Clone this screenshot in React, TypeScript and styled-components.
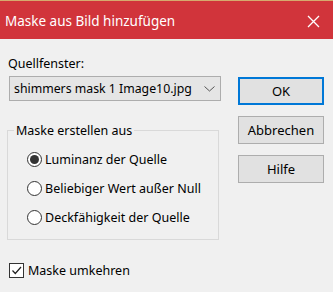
import React from 'react';
import styled, { createGlobalStyle } from 'styled-components';

const GlobalStyle = createGlobalStyle`
    body {
        margin: 0;
        background: #f0f0f0;
        font-family: "Noto Sans", "Liberation Sans", sans-serif;
    }
`;

const options = [
    { label: 'Luminanz der Quelle', checked: true },
    { label: 'Beliebiger Wert außer Null', checked: false },
    { label: 'Deckfähigkeit der Quelle', checked: false },
];

const App: React.FC = () => {
    return (
        <Window>
            <GlobalStyle />
            <TitleBar>
                <Title>Maske aus Bild hinzufügen</Title>
                <CloseIcon width="13" height="13" viewBox="0 0 13 13">
                    <path d="M1 1 L12 12 M12 1 L1 12" stroke="#fff" strokeWidth="1.3" fill="none" />
                </CloseIcon>
            </TitleBar>
            <Content>
                <LeftColumn>
                    <FieldLabel>Quellfenster:</FieldLabel>
                    <Select>
                        <SelectText>shimmers mask 1 Image10.jpg</SelectText>
                        <svg width="11" height="6" viewBox="0 0 11 6">
                            <path d="M0.5 0.5 L5.5 5 L10.5 0.5" stroke="#555" strokeWidth="1" fill="none" />
                        </svg>
                    </Select>
                    <GroupBox>
                        <Legend>Maske erstellen aus</Legend>
                        <RadioList>
                            {options.map((option) => (
                                <RadioRow key={option.label}>
                                    <RadioCircle $checked={option.checked} />
                                    <OptionText>{option.label}</OptionText>
                                </RadioRow>
                            ))}
                        </RadioList>
                    </GroupBox>
                    <CheckRow>
                        <CheckBox>
                            <svg width="13" height="13" viewBox="0 0 13 13">
                                <path d="M2.5 6.5 L5.3 9.5 L11 3" stroke="#222" strokeWidth="1.2" fill="none" />
                            </svg>
                        </CheckBox>
                        <OptionText>Maske umkehren</OptionText>
                    </CheckRow>
                </LeftColumn>
                <ButtonColumn>
                    <DialogButton $primary>OK</DialogButton>
                    <DialogButton>Abbrechen</DialogButton>
                    <DialogButton>Hilfe</DialogButton>
                </ButtonColumn>
            </Content>
        </Window>
    );
};

export default App;

const Window = styled.div`
    width: 333px;
    height: 292px;
    display: flex;
    flex-direction: column;
    background: #f0f0f0;
    overflow: hidden;
`;

const TitleBar = styled.div`
    height: 38px;
    border-top: 1px solid #d6aa6e;
    background: #d1343b;
    display: flex;
    align-items: center;
    justify-content: space-between;
    padding: 0 13px 0 5px;
`;

const Title = styled.div`
    color: #fff;
    font-size: 13.5px;
    margin-top: 2px;
`;

const CloseIcon = styled.svg`
    margin-top: 2px;
`;

const Content = styled.div`
    display: flex;
    padding: 0 0 0 7px;
`;

const LeftColumn = styled.div`
    width: 214px;
    display: flex;
    flex-direction: column;
`;

const FieldLabel = styled.div`
    font-size: 12.5px;
    color: #000;
    line-height: 16px;
    margin: 17px 0 0 1px;
`;

const Select = styled.div`
    margin: 4px 0 0 2px;
    width: 212px;
    height: 25px;
    box-sizing: border-box;
    background: #e5e5e5;
    border: 1px solid #adadad;
    display: flex;
    align-items: center;
    justify-content: space-between;
    padding: 0 5px 0 4px;
    white-space: nowrap;
`;

const SelectText = styled.span`
    font-size: 12.3px;
    color: #000;
`;

const GroupBox = styled.fieldset`
    margin: 21px 0 0 0;
    width: 212px;
    min-width: 0;
    height: 118px;
    box-sizing: border-box;
    border: 1px solid #d9d9d9;
    padding: 0 0 0 6px;
`;

const Legend = styled.legend`
    font-size: 12.5px;
    color: #000;
    padding: 0 2px;
`;

const RadioList = styled.div`
    padding: 6px 0 0 13px;
`;

const RadioRow = styled.div`
    display: flex;
    align-items: center;
    gap: 3px;
    height: 29px;
    white-space: nowrap;
`;

const RadioCircle = styled.span<{ $checked: boolean }>`
    width: 15px;
    height: 15px;
    box-sizing: border-box;
    border: 1px solid #333;
    border-radius: 50%;
    background: #fff;
    display: flex;
    align-items: center;
    justify-content: center;
    &::after {
        content: '';
        width: 9px;
        height: 9px;
        border-radius: 50%;
        background: #333;
        display: ${({ $checked }) => ($checked ? 'block' : 'none')};
    }
`;

const OptionText = styled.span`
    font-size: 12.5px;
    color: #000;
`;

const CheckRow = styled.div`
    display: flex;
    align-items: center;
    gap: 4px;
    margin: 22px 0 0 2px;
`;

const CheckBox = styled.span`
    width: 15px;
    height: 15px;
    box-sizing: border-box;
    border: 1px solid #333;
    background: #fff;
    display: flex;
    align-items: center;
    justify-content: center;
`;

const ButtonColumn = styled.div`
    display: flex;
    flex-direction: column;
    gap: 11px;
    margin: 38px 0 0 17px;
`;

const DialogButton = styled.button<{ $primary?: boolean }>`
    width: 86px;
    height: 28px;
    box-sizing: border-box;
    background: #e1e1e1;
    border: ${({ $primary }) => ($primary ? '2px solid #0078d7' : '1px solid #adadad')};
    font-family: inherit;
    font-size: 13px;
    color: #000;
    padding: 0;
`;
